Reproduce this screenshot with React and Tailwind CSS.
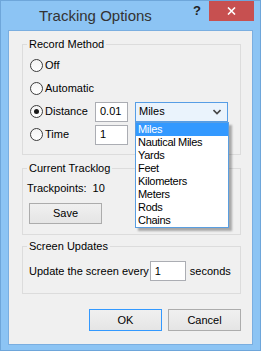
import React from 'react'

const units = ['Miles', 'Nautical Miles', 'Yards', 'Feet', 'Kilometers', 'Meters', 'Rods', 'Chains']

const Radio = ({ checked }) => (
  <span className="flex h-[13px] w-[13px] items-center justify-center rounded-full border border-[#3c3c3c] bg-gradient-to-b from-[#f4f4f4] to-white">
    {checked && <span className="h-[5px] w-[5px] rounded-full bg-[#1a1a1a]" />}
  </span>
)

const Group = ({ title, className, children }) => (
  <div className={`relative ml-[13px] mr-[11px] border border-[#dcdcdc] ${className}`}>
    <span className="absolute -top-[7px] left-[4px] bg-[#f0f0f0] px-[2px] leading-[13px]">{title}</span>
    {children}
  </div>
)

const Field = ({ value, className }) => (
  <div className={`flex h-[20px] items-center border border-[#abadb3] bg-white pl-[4px] ${className}`}>{value}</div>
)

const Button = ({ label, primary, className }) => (
  <div
    className={`flex items-center justify-center border bg-gradient-to-b from-[#f0f0f0] to-[#e5e5e5] ${
      primary ? 'border-[#3399ff]' : 'border-[#acacac]'
    } ${className}`}
  >
    {label}
  </div>
)

const App = () => {
  return (
    <div className="flex h-[351px] w-[261px] flex-col border border-[#6ea6da] bg-[#8cc4f4] font-['Liberation_Sans',Arial,sans-serif] text-[11px] text-black">
      {/* title bar */}
      <div className="relative flex h-[29px] items-center">
        <span className="pl-[38px] text-[15px] leading-[29px] text-[#333]">Tracking Options</span>
        <span className="absolute left-[192px] top-[3px] text-[13px] font-bold leading-[13px] text-[#222]">?</span>
        <div className="absolute right-[6px] top-0 flex h-[20px] w-[45px] items-center justify-center bg-[#c75050]">
          <svg width="9" height="8" viewBox="0 0 9 8">
            <path d="M1 0.5 L8 7.5 M8 0.5 L1 7.5" stroke="white" strokeWidth="1.6" />
          </svg>
        </div>
      </div>

      {/* client area */}
      <div className="mx-[7px] flex h-[315px] flex-col border border-[#7aaee0] bg-[#f0f0f0] pt-[13px]">
        <Group title="Record Method" className="h-[111px]">
          <div className="flex flex-col pl-[7px] pt-[9px]">
            <div className="flex h-[23px] items-center gap-[2px]">
              <Radio />
              <span>Off</span>
            </div>
            <div className="flex h-[23px] items-center gap-[2px]">
              <Radio />
              <span>Automatic</span>
            </div>
            <div className="flex h-[23px] items-center">
              <div className="flex w-[65px] items-center gap-[2px]">
                <Radio checked />
                <span>Distance</span>
              </div>
              <Field value="0.01" className="w-[33px]" />
              <div className="relative ml-[7px] flex h-[20px] w-[93px] items-center justify-between border border-[#569de5] bg-[#eaf3fc] pl-[3px] pr-[6px]">
                <span>Miles</span>
                <svg width="8" height="6" viewBox="0 0 8 6">
                  <path d="M0.5 1 L4 4.5 L7.5 1" fill="none" stroke="#444" strokeWidth="1.6" />
                </svg>
                {/* open list */}
                <div className="absolute -left-[1px] top-[19px] z-10 w-[94px] border border-[#5a9ee0] bg-white shadow-[3px_3px_2px_rgba(0,0,0,0.3)]">
                  {units.map((u, i) => (
                    <div
                      key={u}
                      className={`h-[13px] pl-[2px] leading-[13px] tracking-[-0.3px] ${
                        i === 0 ? 'bg-[#3399ff] text-white' : ''
                      }`}
                    >
                      {u}
                    </div>
                  ))}
                </div>
              </div>
            </div>
            <div className="flex h-[23px] items-center">
              <div className="flex w-[65px] items-center gap-[2px]">
                <Radio />
                <span>Time</span>
              </div>
              <Field value="1" className="w-[33px]" />
            </div>
          </div>
        </Group>

        <Group title="Current Tracklog" className="mt-[13px] h-[67px]">
          <div className="flex h-[13px] items-center justify-between pl-[4px] pr-[11px] pt-0 mt-[13px]">
            <span>Trackpoints:&nbsp; 10</span>
            <span>Distance:</span>
          </div>
          <div className="mt-[8px] flex items-center justify-between pl-[6px] pr-[12px]">
            <Button label="Save" className="h-[21px] w-[73px]" />
            <Button label="Clear" className="h-[21px] w-[73px]" />
          </div>
        </Group>

        <Group title="Screen Updates" className="mt-[11px] h-[48px]">
          <div className="flex h-[20px] items-center pl-[6px] pt-0 mt-[14px]">
            <span>Update the screen every</span>
            <Field value="1" className="ml-[1px] w-[36px]" />
            <span className="ml-[4px]">seconds</span>
          </div>
        </Group>

        <div className="mr-[11px] mt-[15px] flex justify-end gap-[6px]">
          <Button label="OK" primary className="h-[22px] w-[73px]" />
          <Button label="Cancel" className="h-[22px] w-[73px]" />
        </div>
      </div>
    </div>
  )
}

export default App
